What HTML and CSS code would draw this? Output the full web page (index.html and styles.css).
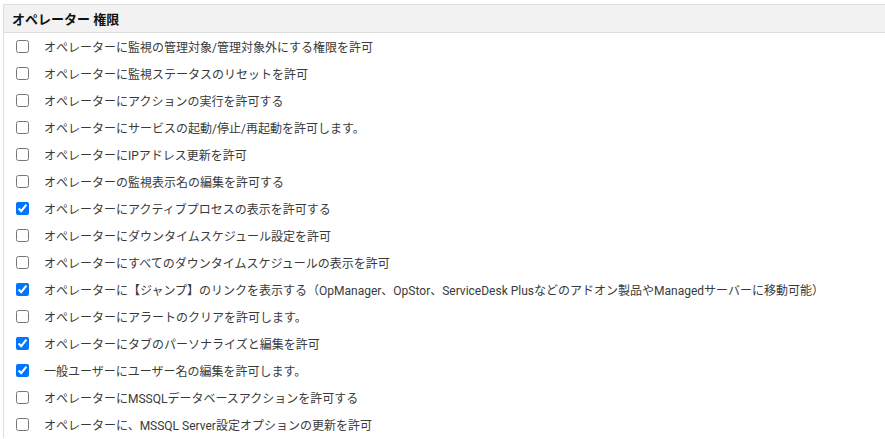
FILE: index.html
```html
<!DOCTYPE html>
<html lang="ja">
<head>
<meta charset="utf-8">
<link rel="stylesheet" href="styles.css">
</head>
<body>
<div class="wrap">
  <div class="panel">
    <div class="head">オペレーター 権限</div>
    <ul class="list">
      <li class="row"><input type="checkbox"><span>オペレーターに監視の管理対象/管理対象外にする権限を許可</span></li>
      <li class="row"><input type="checkbox"><span>オペレーターに監視ステータスのリセットを許可</span></li>
      <li class="row"><input type="checkbox"><span>オペレーターにアクションの実行を許可する</span></li>
      <li class="row"><input type="checkbox"><span>オペレーターにサービスの起動/停止/再起動を許可します。</span></li>
      <li class="row"><input type="checkbox"><span>オペレーターにIPアドレス更新を許可</span></li>
      <li class="row"><input type="checkbox"><span>オペレーターの監視表示名の編集を許可する</span></li>
      <li class="row"><input type="checkbox" checked><span>オペレーターにアクティブプロセスの表示を許可する</span></li>
      <li class="row"><input type="checkbox"><span>オペレーターにダウンタイムスケジュール設定を許可</span></li>
      <li class="row"><input type="checkbox"><span>オペレーターにすべてのダウンタイムスケジュールの表示を許可</span></li>
      <li class="row"><input type="checkbox" checked><span>オペレーターに【ジャンプ】のリンクを表示する（OpManager、OpStor、ServiceDesk Plusなどのアドオン製品やManagedサーバーに移動可能）</span></li>
      <li class="row"><input type="checkbox"><span>オペレーターにアラートのクリアを許可します。</span></li>
      <li class="row"><input type="checkbox" checked><span>オペレーターにタブのパーソナライズと編集を許可</span></li>
      <li class="row"><input type="checkbox" checked><span>一般ユーザーにユーザー名の編集を許可します。</span></li>
      <li class="row"><input type="checkbox"><span>オペレーターにMSSQLデータベースアクションを許可する</span></li>
      <li class="row"><input type="checkbox"><span>オペレーターに、MSSQL Server設定オプションの更新を許可</span></li>
    </ul>
  </div>
</div>
</body>
</html>
```
FILE: styles.css
```css
html, body {
  margin: 0;
  padding: 0;
  background: #fff;
}
body {
  font-family: Roboto, "Noto Sans CJK JP", sans-serif;
  font-size: 12px;
  color: #3a3a3a;
}
.wrap {
  padding: 4px 0 0 3px;
}
.panel {
  border-left: 1px solid #ddd;
  border-top: 1px solid #ddd;
}
.head {
  height: 27px;
  display: flex;
  align-items: center;
  padding-left: 8px;
  background: #f2f2f2;
  border-bottom: 1px solid #ddd;
  font-weight: bold;
  font-size: 13px;
  color: #111;
}
.list {
  list-style: none;
  margin: 0;
  padding: 0;
}
.row {
  height: 27px;
  display: flex;
  align-items: center;
  padding-left: 8px;
}
.row input {
  width: 13px;
  height: 13px;
  margin: 0 15px 0 4px;
  flex: none;
}
```
